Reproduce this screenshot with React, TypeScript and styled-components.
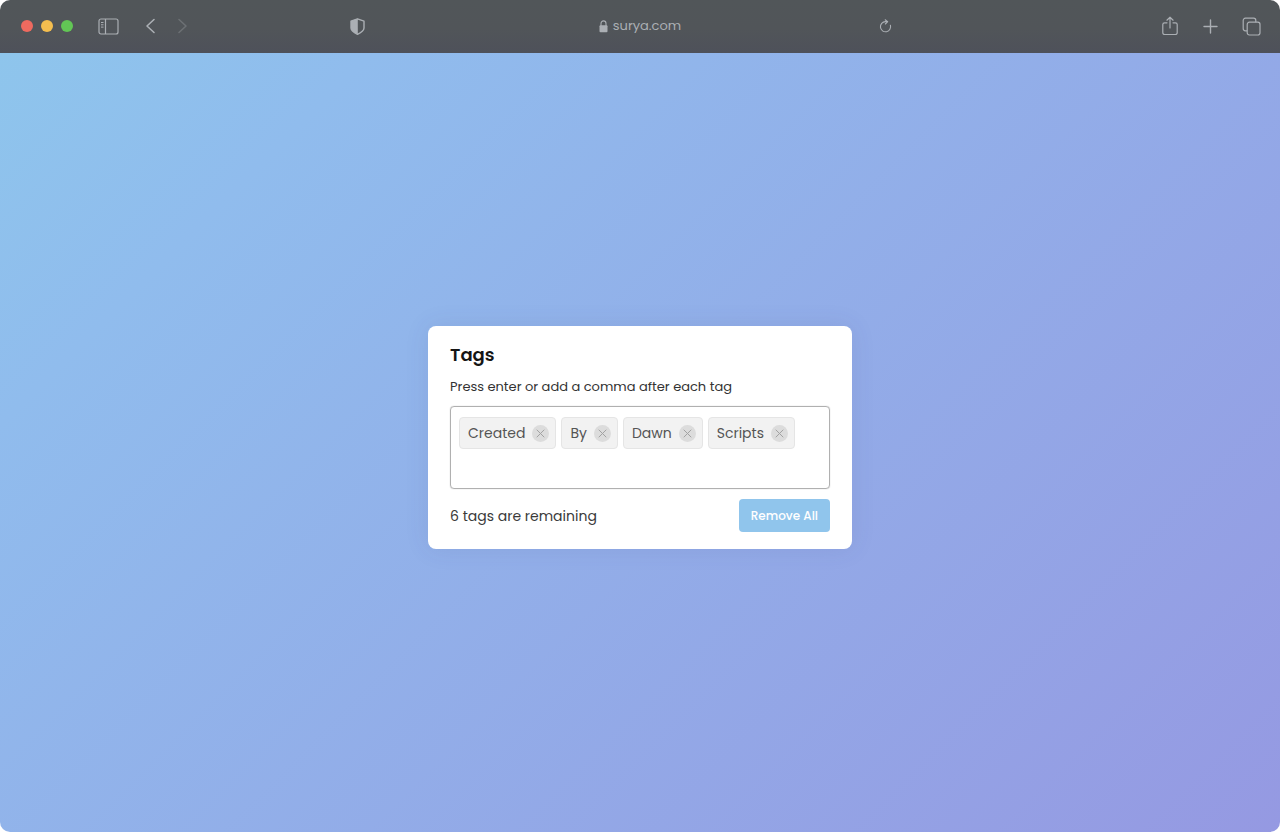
import React, { useState } from "react";
import styled, { createGlobalStyle } from "styled-components";

const GlobalStyle = createGlobalStyle`
  *, *::before, *::after { box-sizing: border-box; }
  body { margin: 0; background: #fff; font-family: Poppins, Inter, sans-serif; }
  button, input { font: inherit; }
  h1, p, ul { margin: 0; padding: 0; }
`;

const Browser = styled.div`
  display: flex;
  flex-direction: column;
  min-height: 100vh;
  border-radius: 10px;
  overflow: hidden;
`;

const Toolbar = styled.header`
  display: flex;
  align-items: center;
  height: 53px;
  padding: 0 19px 1px;
  background: linear-gradient(#515659 0%, #515559 55%, #4e515a 100%);
  color: #abafb4;
`;

const Controls = styled.div`
  flex: 1;
  display: flex;
  align-items: center;
`;

const Lights = styled.div`
  display: flex;
  gap: 8px;
  margin: 0 25px 0 2px;
`;

const Light = styled.span<{ $color: string }>`
  width: 12px;
  height: 12px;
  border-radius: 50%;
  background: ${(p) => p.$color};
`;

const IconButton = styled.button<{ $dim?: boolean }>`
  display: flex;
  padding: 0;
  border: 0;
  background: none;
  color: ${(p) => (p.$dim ? "#6c7074" : "inherit")};
  cursor: pointer;
`;

const History = styled.nav`
  display: flex;
  gap: 20px;
  margin-left: 26px;
`;

const ShieldButton = styled(IconButton)`
  margin: 0 234px 0 auto;
`;

const ReloadButton = styled(IconButton)`
  margin: 0 auto 0 198px;
`;

const Address = styled.a`
  display: flex;
  align-items: center;
  gap: 5px;
  color: inherit;
  font-size: 13px;
  line-height: 20px;
  text-decoration: none;
`;

const Actions = styled.div`
  display: flex;
  align-items: center;
  gap: 24px;
`;

const Page = styled.main`
  flex: 1;
  display: flex;
  align-items: center;
  justify-content: center;
  padding: 16px 16px 26px;
  background: linear-gradient(135deg, #8ec5ec 0%, #90bced 18%, #9599e2 100%);
`;

const Card = styled.section`
  width: 100%;
  max-width: 424px;
  padding: 16px 22px 17px;
  border-radius: 8px;
  background: #fff;
  box-shadow: 0 0 24px rgba(60, 70, 130, 0.1);
`;

const Title = styled.h1`
  font-size: 18px;
  line-height: 26px;
  font-weight: 600;
  color: #151515;
`;

const Hint = styled.label`
  display: block;
  margin: 8px 0;
  font-size: 13px;
  line-height: 22px;
  color: #333;
`;

const TagBox = styled.div`
  min-height: 83px;
  padding: 10px 8px 8px;
  border: 1px solid #b0b0b0;
  border-radius: 4px;
  box-shadow: 0 0 1px #aaa;
`;

const TagList = styled.ul`
  display: flex;
  flex-wrap: wrap;
  gap: 5px;
  list-style: none;
`;

const Tag = styled.li`
  display: flex;
  align-items: center;
  gap: 7px;
  height: 32px;
  padding: 0 6px 0 8px;
  border: 1px solid #e5e5e5;
  border-radius: 4px;
  background: #f2f2f2;
  font-size: 14px;
  color: #555;
`;

const RemoveTag = styled.button`
  display: flex;
  align-items: center;
  justify-content: center;
  width: 17px;
  height: 17px;
  padding: 0;
  border: 0;
  border-radius: 50%;
  background: #dcdcdc;
  color: #a2a2a2;
  cursor: pointer;
`;

const TagInput = styled.input`
  display: block;
  width: 100%;
  height: 26px;
  margin-top: 5px;
  padding: 0 4px;
  border: 0;
  outline: 0;
  background: none;
  font-size: 14px;
`;

const Footer = styled.footer`
  display: flex;
  align-items: center;
  justify-content: space-between;
  margin-top: 10px;
`;

const Remaining = styled.p`
  font-size: 14px;
  line-height: 20px;
  color: #3a3a3a;
`;

const RemoveAll = styled.button`
  height: 33px;
  padding: 0 12px;
  border: 0;
  border-radius: 4px;
  background: #90c5ec;
  color: #fff;
  font-size: 12px;
  font-weight: 500;
  cursor: pointer;
`;

const SidebarIcon = () => (
  <svg width="21" height="17" viewBox="0 0 21 17" fill="none" stroke="currentColor">
    <rect x="1" y="1" width="19" height="15" rx="2" strokeWidth="1.2" />
    <path d="M7.5 1v15" strokeWidth="1.2" />
    <path d="M3 4.5h2.5M3 6.8h2.5M3 9.1h2.5" />
  </svg>
);

const ChevronIcon = ({ forward }: { forward?: boolean }) => (
  <svg width="12" height="16" viewBox="0 0 12 16" fill="none" stroke="currentColor" strokeWidth="1.6" strokeLinecap="round" strokeLinejoin="round">
    <path d={forward ? "M2 1.5 9 8l-7 6.500" : "M9 1.5 2 8l7 6.500"} />
  </svg>
);

const ShieldIcon = () => (
  <svg width="15" height="17" viewBox="0 0 15 17" fill="none">
    <path d="M7.5.8 14 3.1v7c0 2.8-3 4.600-6.500 6.200C4 14.700 1 12.900 1 10.100v-7z" stroke="currentColor" strokeWidth="1.400" strokeLinejoin="round" />
    <path d="M7.800.8 1 3.100v7c0 2.800 3 4.600 6.800 6.200z" fill="currentColor" />
  </svg>
);

const LockIcon = () => (
  <svg width="9" height="13" viewBox="0 0 9 13" fill="none">
    <rect x="0.5" y="5.3" width="8" height="7" rx="1" fill="currentColor" />
    <path d="M2 6V3.4a2.5 2.5 0 0 1 5 0V6" stroke="currentColor" strokeWidth="1.1" />
  </svg>
);

const ReloadIcon = () => (
  <svg width="13" height="14" viewBox="0 0 13 14" fill="none" stroke="currentColor" strokeWidth="1.1" strokeLinecap="round" strokeLinejoin="round">
    <path d="M11.4 6.2a5.1 5.1 0 1 1-5-3.6h2.2" />
    <path d="M6.2.8 8.6 2.7 6.4 5" />
  </svg>
);

const ShareIcon = () => (
  <svg width="17" height="20" viewBox="0 0 17 20" fill="none" stroke="currentColor" strokeWidth="1.2" strokeLinecap="round" strokeLinejoin="round">
    <path d="M5 6.8H2.600A1.800 1.800 0 0 0 .8 8.600v8.100a1.800 1.800 0 0 0 1.800 1.800h10.800a1.800 1.800 0 0 0 1.800-1.800V8.600a1.800 1.800 0 0 0-1.800-1.800H11" />
    <path d="M8 12V1.200M4.900 4.200l3.100-3 3.100 3" />
  </svg>
);

const PlusIcon = () => (
  <svg width="15" height="15" viewBox="0 0 15 15" fill="none" stroke="currentColor" strokeWidth="1.4" strokeLinecap="round">
    <path d="M7.5 1v13M1 7.5h13" />
  </svg>
);

const TabsIcon = () => (
  <svg width="19" height="19" viewBox="0 0 19 19" fill="none" stroke="currentColor" strokeWidth="1.2" strokeLinejoin="round">
    <rect x="5.2" y="5.2" width="12.8" height="12.8" rx="2.2" />
    <path d="M5.2 13.8H3.4A2.2 2.2 0 0 1 1.2 11.6V3.4A2.2 2.2 0 0 1 3.4 1.2h8.200a2.200 2.200 0 0 1 2.200 2.200v1.800" />
  </svg>
);

const CrossIcon = () => (
  <svg width="9" height="9" viewBox="0 0 9 9" fill="none" stroke="currentColor" strokeLinecap="round">
    <path d="m1 1 7 7M8 1 1 8" />
  </svg>
);

const MAX_TAGS = 10;
const INITIAL_TAGS = ["Created", "By", "Dawn", "Scripts"];

export default function App() {
  const [tags, setTags] = useState(INITIAL_TAGS);
  const [draft, setDraft] = useState("");

  const addTags = (text: string) => {
    const names = text.split(",").map((name) => name.trim()).filter(Boolean);
    setTags([...new Set([...tags, ...names])].slice(0, MAX_TAGS));
    setDraft("");
  };

  return (
    <>
      <GlobalStyle />
      <Browser>
        <Toolbar>
          <Controls>
            <Lights>
              <Light $color="#ee6a5f" />
              <Light $color="#f5be4f" />
              <Light $color="#62c655" />
            </Lights>
            <IconButton aria-label="Sidebar"><SidebarIcon /></IconButton>
            <History>
              <IconButton aria-label="Back"><ChevronIcon /></IconButton>
              <IconButton aria-label="Forward" $dim><ChevronIcon forward /></IconButton>
            </History>
            <ShieldButton aria-label="Privacy report"><ShieldIcon /></ShieldButton>
          </Controls>
          <Address href="#"><LockIcon />surya.com</Address>
          <Controls>
            <ReloadButton aria-label="Reload"><ReloadIcon /></ReloadButton>
            <Actions>
              <IconButton aria-label="Share"><ShareIcon /></IconButton>
              <IconButton aria-label="New tab"><PlusIcon /></IconButton>
              <IconButton aria-label="Show tabs"><TabsIcon /></IconButton>
            </Actions>
          </Controls>
        </Toolbar>
        <Page>
          <Card>
            <Title>Tags</Title>
            <Hint htmlFor="tag-input">Press enter or add a comma after each tag</Hint>
            <TagBox>
              <TagList>
                {tags.map((tag) => (
                  <Tag key={tag}>
                    {tag}
                    <RemoveTag aria-label={`Remove ${tag}`} onClick={() => setTags(tags.filter((t) => t !== tag))}>
                      <CrossIcon />
                    </RemoveTag>
                  </Tag>
                ))}
              </TagList>
              <TagInput
                id="tag-input"
                value={draft}
                onChange={(e) => (e.target.value.includes(",") ? addTags(e.target.value) : setDraft(e.target.value))}
                onKeyDown={(e) => e.key === "Enter" && addTags(draft)}
              />
            </TagBox>
            <Footer>
              <Remaining>{MAX_TAGS - tags.length} tags are remaining</Remaining>
              <RemoveAll onClick={() => setTags([])}>Remove All</RemoveAll>
            </Footer>
          </Card>
        </Page>
      </Browser>
    </>
  );
}
